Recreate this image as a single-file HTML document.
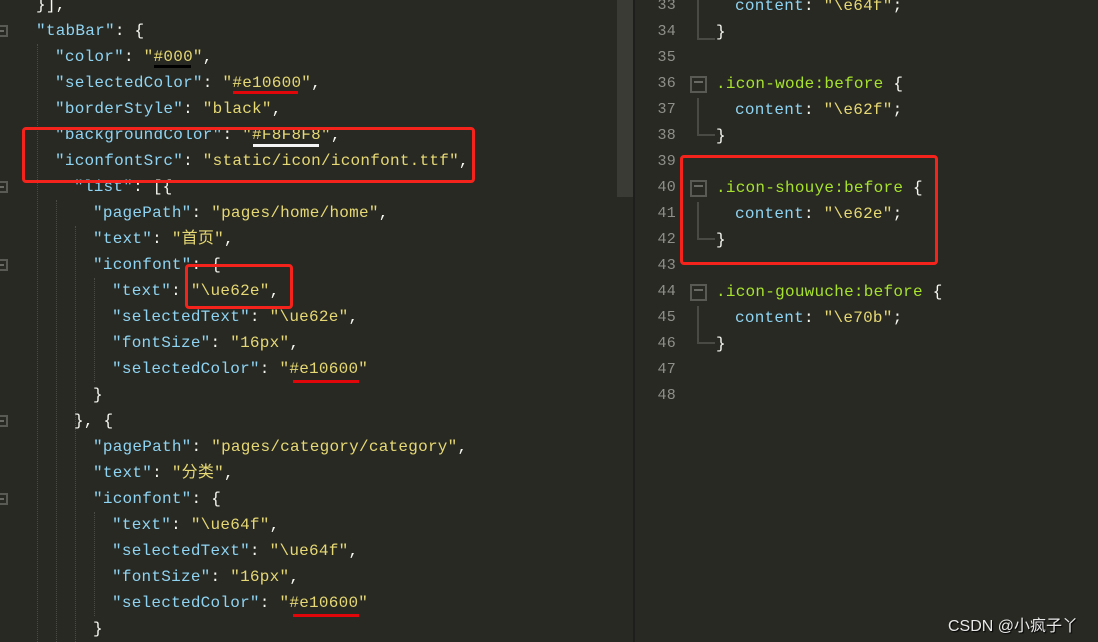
<!DOCTYPE html>
<html><head><meta charset="utf-8"><style>
body{margin:0;width:1098px;height:642px;background:#282923;overflow:hidden;position:relative;font-family:"Liberation Mono","Noto Sans CJK SC",monospace;font-size:16px;color:#f8f8f2}
.l{position:absolute;white-space:pre;line-height:26px;height:26px;letter-spacing:0.25px}
.k{color:#8fd4f2}.s{color:#e6d874}.g{color:#a6e22e}.n{color:#8f908a}
.fold{position:absolute;width:12px;height:12px;border:2px solid #5a5a55;box-sizing:border-box}
.fold:after{content:"";position:absolute;left:2px;right:2px;top:3px;height:2px;background:#6a6a65}
.box{position:absolute;border:3px solid #f4241c;border-radius:4px;box-sizing:border-box}
.ul{position:absolute;height:3px}
.guide{position:absolute;width:0;border-left:1px dotted #4a4a45}
</style></head><body>
<div style="position:absolute;left:617px;top:0;width:16px;height:197px;background:#3b3b36"></div>
<div style="position:absolute;left:633px;top:0;width:2px;height:642px;background:#1e1f1a"></div>

<div class="guide" style="left:37px;top:44px;height:598px"></div>
<div class="guide" style="left:56px;top:200px;height:442px"></div>
<div class="guide" style="left:75px;top:226px;height:416px"></div>
<div class="guide" style="left:94px;top:278px;height:104px"></div>
<div class="guide" style="left:94px;top:512px;height:104px"></div>

<div class="fold" style="left:-4px;top:25px"></div>
<div class="fold" style="left:-4px;top:181px"></div>
<div class="fold" style="left:-4px;top:259px"></div>
<div class="fold" style="left:-4px;top:415px"></div>
<div class="fold" style="left:-4px;top:493px"></div>

<div class="l" style="left:36px;top:-8px">}],</div>
<div class="l" style="left:36px;top:18px"><span class="k">"tabBar"</span>: {</div>
<div class="l" style="left:55px;top:44px"><span class="k">"color"</span>: <span class="s">"#000"</span>,</div>
<div class="l" style="left:55px;top:70px"><span class="k">"selectedColor"</span>: <span class="s">"#e10600"</span>,</div>
<div class="l" style="left:55px;top:96px"><span class="k">"borderStyle"</span>: <span class="s">"black"</span>,</div>
<div class="l" style="left:55px;top:122px"><span class="k">"backgroundColor"</span>: <span class="s">"#F8F8F8"</span>,</div>
<div class="l" style="left:55px;top:148px"><span class="k">"iconfontSrc"</span>: <span class="s">"static/icon/iconfont.ttf"</span>,</div>
<div class="l" style="left:74px;top:174px"><span class="k">"list"</span>: [{</div>
<div class="l" style="left:93px;top:200px"><span class="k">"pagePath"</span>: <span class="s">"pages/home/home"</span>,</div>
<div class="l" style="left:93px;top:226px"><span class="k">"text"</span>: <span class="s">"首页"</span>,</div>
<div class="l" style="left:93px;top:252px"><span class="k">"iconfont"</span>: {</div>
<div class="l" style="left:112px;top:278px"><span class="k">"text"</span>: <span class="s">"\ue62e"</span>,</div>
<div class="l" style="left:112px;top:304px"><span class="k">"selectedText"</span>: <span class="s">"\ue62e"</span>,</div>
<div class="l" style="left:112px;top:330px"><span class="k">"fontSize"</span>: <span class="s">"16px"</span>,</div>
<div class="l" style="left:112px;top:356px"><span class="k">"selectedColor"</span>: <span class="s">"#e10600"</span></div>
<div class="l" style="left:93px;top:382px">}</div>
<div class="l" style="left:74px;top:408px">}, {</div>
<div class="l" style="left:93px;top:434px"><span class="k">"pagePath"</span>: <span class="s">"pages/category/category"</span>,</div>
<div class="l" style="left:93px;top:460px"><span class="k">"text"</span>: <span class="s">"分类"</span>,</div>
<div class="l" style="left:93px;top:486px"><span class="k">"iconfont"</span>: {</div>
<div class="l" style="left:112px;top:512px"><span class="k">"text"</span>: <span class="s">"\ue64f"</span>,</div>
<div class="l" style="left:112px;top:538px"><span class="k">"selectedText"</span>: <span class="s">"\ue64f"</span>,</div>
<div class="l" style="left:112px;top:564px"><span class="k">"fontSize"</span>: <span class="s">"16px"</span>,</div>
<div class="l" style="left:112px;top:590px"><span class="k">"selectedColor"</span>: <span class="s">"#e10600"</span></div>
<div class="l" style="left:93px;top:616px">}</div>

<div class="ul" style="left:154px;top:65px;width:37px;background:#000"></div>
<div class="ul" style="left:233px;top:91px;width:65px;background:#e0060a"></div>
<div class="ul" style="left:253px;top:144px;width:66px;background:#f4f4f4"></div>
<div class="ul" style="left:293px;top:380px;width:66px;background:#e0060a"></div>
<div class="ul" style="left:293px;top:614px;width:66px;background:#e0060a"></div>
<div class="box" style="left:22px;top:127px;width:453px;height:56px"></div>
<div class="box" style="left:185px;top:264px;width:108px;height:45px"></div>

<div style="position:absolute;left:697px;top:0;width:18px;height:40px;border-left:2px solid #4a4a45;border-bottom:2px solid #4a4a45;box-sizing:border-box"></div>
<div style="position:absolute;left:697px;top:98px;width:18px;height:38px;border-left:2px solid #4a4a45;border-bottom:2px solid #4a4a45;box-sizing:border-box"></div>
<div style="position:absolute;left:697px;top:202px;width:18px;height:38px;border-left:2px solid #4a4a45;border-bottom:2px solid #4a4a45;box-sizing:border-box"></div>
<div style="position:absolute;left:697px;top:306px;width:18px;height:38px;border-left:2px solid #4a4a45;border-bottom:2px solid #4a4a45;box-sizing:border-box"></div>
<div class="fold" style="left:690px;top:76px;width:17px;height:17px"></div>
<div class="fold" style="left:690px;top:180px;width:17px;height:17px"></div>
<div class="fold" style="left:690px;top:284px;width:17px;height:17px"></div>

<div class="l n" style="left:646px;top:-7px;width:30px;text-align:right;font-size:15px">33</div>
<div class="l n" style="left:646px;top:19px;width:30px;text-align:right;font-size:15px">34</div>
<div class="l n" style="left:646px;top:45px;width:30px;text-align:right;font-size:15px">35</div>
<div class="l n" style="left:646px;top:71px;width:30px;text-align:right;font-size:15px">36</div>
<div class="l n" style="left:646px;top:97px;width:30px;text-align:right;font-size:15px">37</div>
<div class="l n" style="left:646px;top:123px;width:30px;text-align:right;font-size:15px">38</div>
<div class="l n" style="left:646px;top:149px;width:30px;text-align:right;font-size:15px">39</div>
<div class="l n" style="left:646px;top:175px;width:30px;text-align:right;font-size:15px">40</div>
<div class="l n" style="left:646px;top:201px;width:30px;text-align:right;font-size:15px">41</div>
<div class="l n" style="left:646px;top:227px;width:30px;text-align:right;font-size:15px">42</div>
<div class="l n" style="left:646px;top:253px;width:30px;text-align:right;font-size:15px">43</div>
<div class="l n" style="left:646px;top:279px;width:30px;text-align:right;font-size:15px">44</div>
<div class="l n" style="left:646px;top:305px;width:30px;text-align:right;font-size:15px">45</div>
<div class="l n" style="left:646px;top:331px;width:30px;text-align:right;font-size:15px">46</div>
<div class="l n" style="left:646px;top:357px;width:30px;text-align:right;font-size:15px">47</div>
<div class="l n" style="left:646px;top:383px;width:30px;text-align:right;font-size:15px">48</div>

<div class="l" style="left:735px;top:-7px"><span class="k">content</span>: <span class="s">"\e64f"</span>;</div>
<div class="l" style="left:716px;top:19px">}</div>
<div class="l" style="left:716px;top:71px"><span class="g">.icon-wode:before</span> {</div>
<div class="l" style="left:735px;top:97px"><span class="k">content</span>: <span class="s">"\e62f"</span>;</div>
<div class="l" style="left:716px;top:123px">}</div>
<div class="l" style="left:716px;top:175px"><span class="g">.icon-shouye:before</span> {</div>
<div class="l" style="left:735px;top:201px"><span class="k">content</span>: <span class="s">"\e62e"</span>;</div>
<div class="l" style="left:716px;top:227px">}</div>
<div class="l" style="left:716px;top:279px"><span class="g">.icon-gouwuche:before</span> {</div>
<div class="l" style="left:735px;top:305px"><span class="k">content</span>: <span class="s">"\e70b"</span>;</div>
<div class="l" style="left:716px;top:331px">}</div>
<div class="box" style="left:680px;top:155px;width:258px;height:110px"></div>

<div style="position:absolute;left:948px;top:612px;font-family:'Liberation Sans','Noto Sans CJK SC',sans-serif;font-size:16px;color:#e8e8e8;text-shadow:1px 1px 1px #000;white-space:nowrap">CSDN @小疯子丫</div>
</body></html>
